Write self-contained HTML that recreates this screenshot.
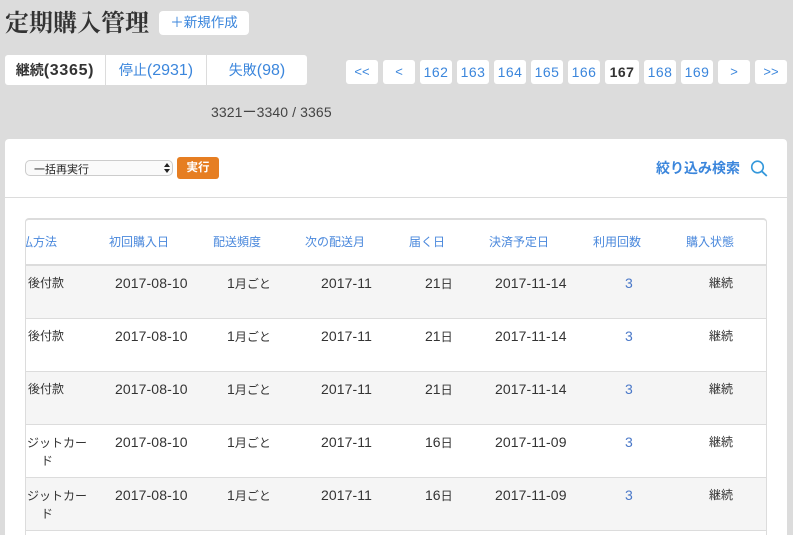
<!DOCTYPE html>
<html lang="ja"><head><meta charset="utf-8">
<style>
*{box-sizing:border-box}
html,body{margin:0;padding:0;width:793px;height:535px;overflow:hidden}
body{background:#dcdcdc;font-family:"Liberation Sans","Noto Sans CJK JP",sans-serif;font-size:12px;color:#333}
#w{position:absolute;left:0;top:0;width:793px;height:535px;overflow:hidden;background:#dcdcdc}
.a{position:absolute;white-space:nowrap}
.b{position:absolute;background:#fff;border-radius:3px;top:60px;height:24px;line-height:24px;text-align:center;color:#3b86dc;font-size:14px;letter-spacing:.45px}
.s{font-size:13px;letter-spacing:0}
.h{position:absolute;top:235px;line-height:14px;color:#4a88dc;font-size:12px;white-space:nowrap}
.c{position:absolute;white-space:nowrap;line-height:14px;font-size:12px;color:#333}
.n{font-size:14px;letter-spacing:.02px}
.d{font-size:14px;letter-spacing:.1px}
.t{font-size:16px}
.l{position:absolute;left:26px;width:740px;height:1px;background:#dcdcdc}
.g{position:absolute;left:26px;width:740px;background:#f5f5f5}
</style></head><body><div id="w">
<div class="a" style="left:5px;top:10px;font:bold 24px/28px 'Liberation Serif','Noto Serif CJK SC',serif;color:#333">定期購入管理</div>
<div class="a" style="left:159px;top:11px;width:90px;height:24px;background:#fff;border-radius:4px;text-align:center;line-height:24px;font-size:13.5px;color:#3b86dc">＋新規作成</div>

<div class="a" style="left:5px;top:55px;width:302px;height:30px;background:#fff;border-radius:3px"></div>
<div class="a" style="left:105px;top:55px;width:1px;height:30px;background:#dcdcdc"></div>
<div class="a" style="left:206px;top:55px;width:1px;height:30px;background:#dcdcdc"></div>
<div class="a" style="left:5px;top:55px;width:100px;text-align:center;line-height:30px;font-size:14px;font-weight:bold;color:#333">継続<span class="t" style="letter-spacing:.7px">(3365)</span></div>
<div class="a" style="left:106px;top:55px;width:100px;text-align:center;line-height:30px;font-size:14px;color:#3b86dc">停止<span class="t">(2931)</span></div>
<div class="a" style="left:207px;top:55px;width:100px;text-align:center;line-height:30px;font-size:14px;color:#3b86dc">失敗<span class="t">(98)</span></div>

<div class="b s" style="left:346px;width:32px">&lt;&lt;</div>
<div class="b s" style="left:383px;width:32px">&lt;</div>
<div class="b" style="left:420px;width:32px">162</div>
<div class="b" style="left:457px;width:32px">163</div>
<div class="b" style="left:494px;width:32px">164</div>
<div class="b" style="left:531px;width:32px">165</div>
<div class="b" style="left:568px;width:32px">166</div>
<div class="b" style="left:605px;width:34px;color:#333;font-weight:bold">167</div>
<div class="b" style="left:644px;width:32px">168</div>
<div class="b" style="left:681px;width:32px">169</div>
<div class="b s" style="left:718px;width:32px">&gt;</div>
<div class="b s" style="left:755px;width:32px">&gt;&gt;</div>

<div class="a" style="left:211px;top:105px;line-height:15px;font-size:14px;letter-spacing:.1px;color:#444">3321ー3340 / 3365</div>

<div class="a" style="left:5px;top:139px;width:782px;height:396px;background:#fff;border-radius:4px 4px 0 0"></div>
<div class="a" style="left:5px;top:197px;width:782px;height:1px;background:#dcdcdc"></div>

<div class="a" style="left:25px;top:160px;width:148px;height:16px;border:1px solid #ccc;border-radius:5px;background:#fafafa;overflow:hidden;font-size:11px;line-height:18px;padding-left:8px;color:#222">一括再実行</div>
<svg class="a" style="left:162px;top:161px" width="10" height="14" viewBox="0 0 10 14"><path d="M2 6 5 2 8 6Z M2 8 5 12 8 8Z" fill="#222"/></svg>
<div class="a" style="left:177px;top:157px;width:42px;height:22px;background:#e67e22;border-radius:3px;text-align:center;line-height:22px;color:#fff;font-size:11.5px;font-weight:bold">実行</div>

<div class="a" style="left:656px;top:159px;line-height:18px;font-size:14px;font-weight:bold;color:#3b86dc;letter-spacing:0">絞り込み検索</div>
<svg class="a" style="left:750px;top:159px" width="18" height="18" viewBox="0 0 18 18"><circle cx="7.5" cy="8" r="5.8" fill="none" stroke="#3498db" stroke-width="1.6"/><path d="M11.8 12.3 16.8 17" stroke="#3498db" stroke-width="1.8" fill="none"/></svg>

<div class="a" style="left:25px;top:218px;width:742px;height:330px;border:1px solid #dcdcdc;border-top:2px solid #dcdcdc;border-bottom:0;border-radius:4px 4px 0 0"></div>

<div class="g" style="top:266px;height:52px"></div>
<div class="g" style="top:372px;height:52px"></div>
<div class="g" style="top:478px;height:52px"></div>
<div class="l" style="top:264px;height:2px"></div>
<div class="l" style="top:318px"></div>
<div class="l" style="top:371px"></div>
<div class="l" style="top:424px"></div>
<div class="l" style="top:477px"></div>
<div class="l" style="top:530px"></div>

<div style="position:absolute;left:26px;top:218px;width:200px;height:317px;overflow:hidden">
<div class="h" style="left:-17px;top:17px">支払方法</div>
<div class="c" style="left:2px;top:58px">後付款</div>
<div class="c" style="left:2px;top:111px">後付款</div>
<div class="c" style="left:2px;top:164px">後付款</div>
<div class="c" style="left:-23px;top:218px">クレジットカー</div>
<div class="c" style="left:15px;top:236px;width:12px">ド</div>
<div class="c" style="left:-23px;top:271px">クレジットカー</div>
<div class="c" style="left:15px;top:289px;width:12px">ド</div>
</div>

<div class="h" style="left:109px">初回購入日</div>
<div class="h" style="left:213px">配送頻度</div>
<div class="h" style="left:305px">次の配送月</div>
<div class="h" style="left:409px">届く日</div>
<div class="h" style="left:489px">決済予定日</div>
<div class="h" style="left:593px">利用回数</div>
<div class="h" style="left:686px">購入状態</div>

<div class="c d" style="left:115px;top:276px">2017-08-10</div><div class="c" style="left:227px;top:276px"><span class="n">1</span>月ごと</div><div class="c d" style="left:321px;top:276px">2017-11</div><div class="c" style="left:425px;top:276px"><span class="n">21</span>日</div><div class="c d" style="left:495px;top:276px">2017-11-14</div><div class="c n" style="left:625px;top:276px;color:#4a78c8">3</div><div class="c" style="left:709px;top:276px">継続</div>
<div class="c d" style="left:115px;top:329px">2017-08-10</div><div class="c" style="left:227px;top:329px"><span class="n">1</span>月ごと</div><div class="c d" style="left:321px;top:329px">2017-11</div><div class="c" style="left:425px;top:329px"><span class="n">21</span>日</div><div class="c d" style="left:495px;top:329px">2017-11-14</div><div class="c n" style="left:625px;top:329px;color:#4a78c8">3</div><div class="c" style="left:709px;top:329px">継続</div>
<div class="c d" style="left:115px;top:382px">2017-08-10</div><div class="c" style="left:227px;top:382px"><span class="n">1</span>月ごと</div><div class="c d" style="left:321px;top:382px">2017-11</div><div class="c" style="left:425px;top:382px"><span class="n">21</span>日</div><div class="c d" style="left:495px;top:382px">2017-11-14</div><div class="c n" style="left:625px;top:382px;color:#4a78c8">3</div><div class="c" style="left:709px;top:382px">継続</div>
<div class="c d" style="left:115px;top:435px">2017-08-10</div><div class="c" style="left:227px;top:435px"><span class="n">1</span>月ごと</div><div class="c d" style="left:321px;top:435px">2017-11</div><div class="c" style="left:425px;top:435px"><span class="n">16</span>日</div><div class="c d" style="left:495px;top:435px">2017-11-09</div><div class="c n" style="left:625px;top:435px;color:#4a78c8">3</div><div class="c" style="left:709px;top:435px">継続</div>
<div class="c d" style="left:115px;top:488px">2017-08-10</div><div class="c" style="left:227px;top:488px"><span class="n">1</span>月ごと</div><div class="c d" style="left:321px;top:488px">2017-11</div><div class="c" style="left:425px;top:488px"><span class="n">16</span>日</div><div class="c d" style="left:495px;top:488px">2017-11-09</div><div class="c n" style="left:625px;top:488px;color:#4a78c8">3</div><div class="c" style="left:709px;top:488px">継続</div>
</div></body></html>
